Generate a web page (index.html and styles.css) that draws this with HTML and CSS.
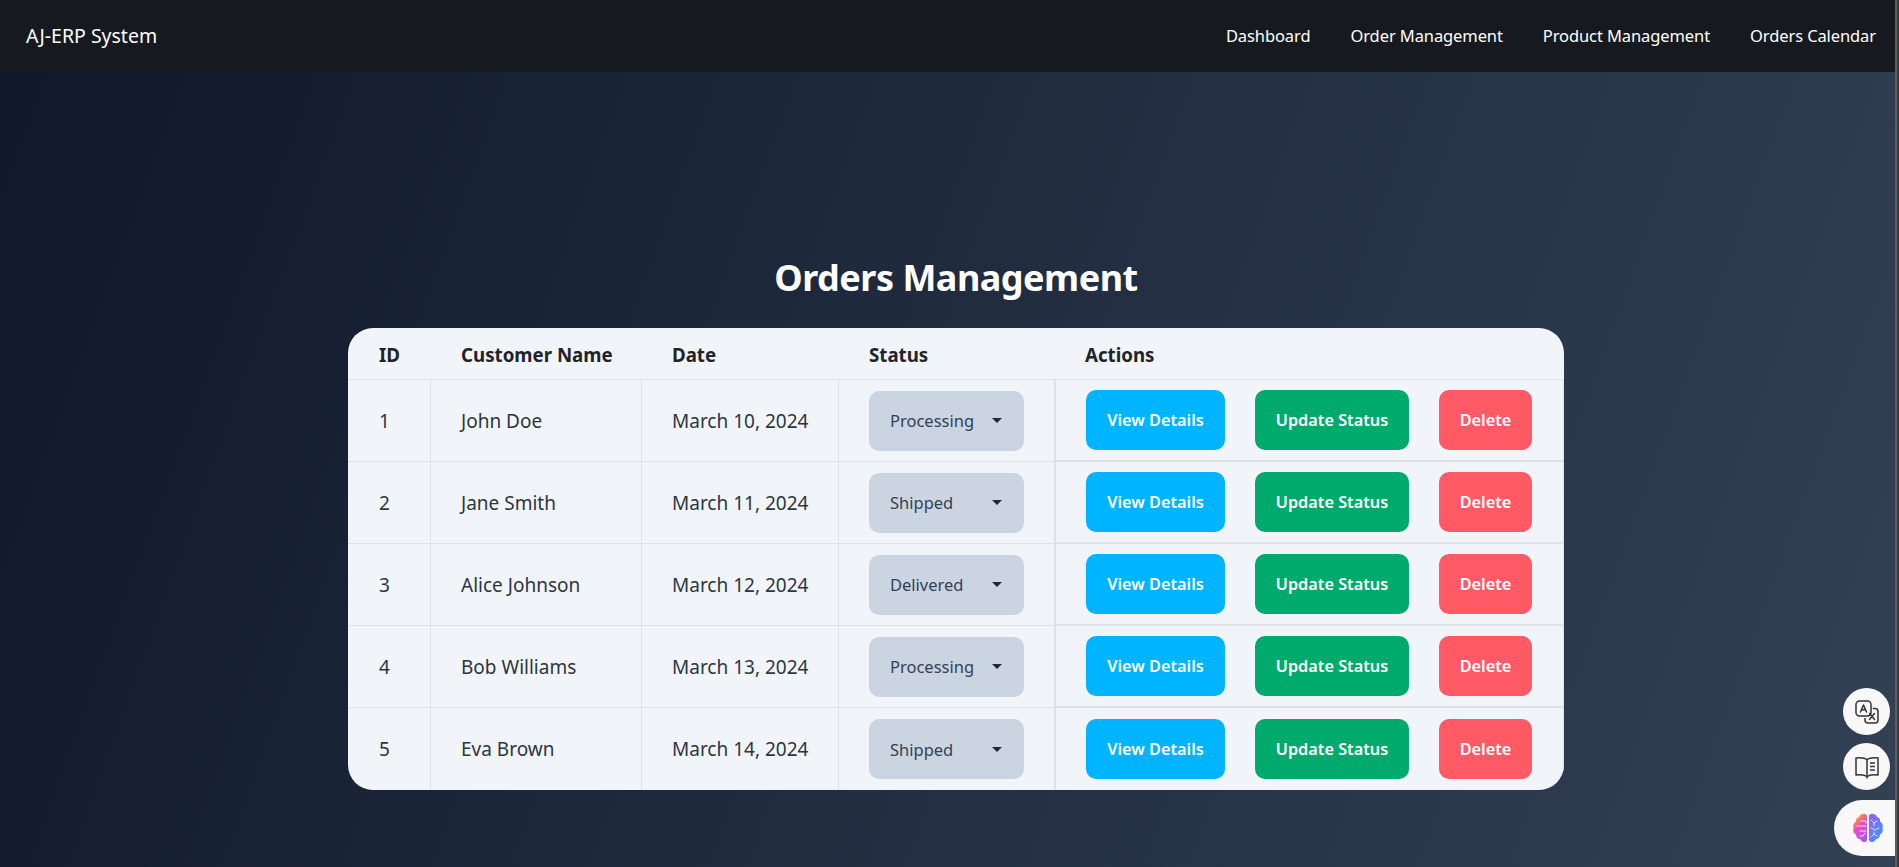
FILE: index.html
```html
<!DOCTYPE html>
<html lang="en">
<head>
<meta charset="utf-8">
<title>AJ-ERP System</title>
<link rel="stylesheet" href="styles.css">
</head>
<body>
<nav class="navbar">
  <a class="brand" href="#">AJ-ERP System</a>
  <div class="nav-links">
    <a href="#">Dashboard</a>
    <a href="#">Order Management</a>
    <a href="#">Product Management</a>
    <a href="#">Orders Calendar</a>
  </div>
</nav>
<main class="content">
  <h1 class="title">Orders Management</h1>
  <div class="table-card">
    <table class="orders">
      <colgroup>
        <col class="c-id"><col class="c-name"><col class="c-date"><col class="c-status"><col class="c-actions">
      </colgroup>
      <thead>
        <tr><th>ID</th><th>Customer Name</th><th>Date</th><th>Status</th><th>Actions</th></tr>
      </thead>
      <tbody>
        <tr>
          <td>1</td><td>John Doe</td><td>March 10, 2024</td>
          <td><div class="select"><span>Processing</span><i class="caret"></i></div></td>
          <td class="actions"><div class="btns"><button class="btn view">View Details</button><button class="btn update">Update Status</button><button class="btn del">Delete</button></div></td>
        </tr>
        <tr>
          <td>2</td><td>Jane Smith</td><td>March 11, 2024</td>
          <td><div class="select"><span>Shipped</span><i class="caret"></i></div></td>
          <td class="actions"><div class="btns"><button class="btn view">View Details</button><button class="btn update">Update Status</button><button class="btn del">Delete</button></div></td>
        </tr>
        <tr>
          <td>3</td><td>Alice Johnson</td><td>March 12, 2024</td>
          <td><div class="select"><span>Delivered</span><i class="caret"></i></div></td>
          <td class="actions"><div class="btns"><button class="btn view">View Details</button><button class="btn update">Update Status</button><button class="btn del">Delete</button></div></td>
        </tr>
        <tr>
          <td>4</td><td>Bob Williams</td><td>March 13, 2024</td>
          <td><div class="select"><span>Processing</span><i class="caret"></i></div></td>
          <td class="actions"><div class="btns"><button class="btn view">View Details</button><button class="btn update">Update Status</button><button class="btn del">Delete</button></div></td>
        </tr>
        <tr>
          <td>5</td><td>Eva Brown</td><td>March 14, 2024</td>
          <td><div class="select"><span>Shipped</span><i class="caret"></i></div></td>
          <td class="actions"><div class="btns"><button class="btn view">View Details</button><button class="btn update">Update Status</button><button class="btn del">Delete</button></div></td>
        </tr>
      </tbody>
    </table>
  </div>
</main>
<div class="scrollbar"></div>
<div class="float-tools">
  <div class="fab">
    <svg width="26" height="26" viewBox="0 0 26 26" fill="none" stroke="#333" stroke-width="1.5" stroke-linejoin="round" stroke-linecap="round">
      <rect x="2" y="2" width="15" height="15" rx="3.5" fill="#f8f8f8"/>
      <path d="M6.5 13 9.5 6 12.5 13M7.6 10.8h3.8"/>
      <path d="M19.5 9.5h1.5a3 3 0 0 1 3 3V21a3 3 0 0 1-3 3h-7a3 3 0 0 1-3-3v-1.5"/>
      <path d="M15.5 14.5l5 6M20.5 14.5l-5 6"/>
    </svg>
  </div>
  <div class="fab">
    <svg width="26" height="26" viewBox="0 0 26 26" fill="none" stroke="#333" stroke-width="1.5" stroke-linejoin="round">
      <path d="M13 5.5C11 4 7 3.5 2 4v17c5-.5 9 0 11 1.5 2-1.5 6-2 11-1.5V4c-5-.5-9 0-11 1.5Z"/>
      <path d="M13 5.5v19M16 9h5M16 12.5h5M16 16h5"/>
    </svg>
  </div>
  <div class="ai-tab">
    <svg width="32" height="30" viewBox="0 0 32 30" fill="none">
      <defs>
        <linearGradient id="brainL" x1="0.3" y1="0" x2="0.8" y2="1">
          <stop offset="0.08" stop-color="#ff9d2e"/><stop offset=".42" stop-color="#e84bc4"/><stop offset="1" stop-color="#a855f7"/>
        </linearGradient>
        <linearGradient id="brainR" x1="0" y1="0" x2="1" y2="1">
          <stop offset="0" stop-color="#9b5cf6"/><stop offset="1" stop-color="#2f9bff"/>
        </linearGradient>
      </defs>
      <path fill="url(#brainL)" d="M15 3.500C15 1.500 13 .5 11 1 9 1 7.500 2 7 4 4.500 4.500 3.500 6.500 4 8.500 1.500 10 .5 12.500 1.500 15 .5 18 2 20.500 4 21.500 4 24 5.500 26 8 26 9 28.500 11.500 29.500 13 29 14.500 28.500 15 27.500 15 26Z"/>
      <path fill="url(#brainR)" d="M17 3.500C17 1.500 19 .5 21 1 23 1 24.500 2 25 4 27.500 4.500 28.500 6.500 28 8.500 30.500 10 31.500 12.500 30.500 15 31.500 18 30 20.500 28 21.500 28 24 26.500 26 24 26 23 28.500 20.500 29.500 19 29 17.500 28.500 17 27.500 17 26Z"/>
      <path stroke="#fff" stroke-opacity=".8" stroke-width="1" stroke-linecap="round" stroke-linejoin="round" d="M5 13h9M8 18h6M9 8h5v2M8 23h3l2-3M19 7l3 3 3-2M22 10v3M19 15l4 2 4-2M19 24l3-3 3 2M22 21v-2"/>
    </svg>
  </div>
</div>
</body>
</html>
```
FILE: styles.css
```css
* { box-sizing: border-box; }

html, body { height: 100%; }

body {
  margin: 0;
  overflow: hidden;
  font-family: "Noto Sans", "Open Sans", sans-serif;
  background: linear-gradient(110deg, #0f172a 0%, #334155 100%);
}

.navbar {
  display: flex;
  align-items: center;
  justify-content: space-between;
  height: 72px;
  padding: 0 23px 1px 26px;
  background: #161a1f;
}

.navbar a {
  color: #fff;
  text-decoration: none;
}

.brand { font-size: 19.500px; }

.nav-links {
  display: flex;
  gap: 40px;
  font-size: 16.500px;
  letter-spacing: -0.1px;
}

.content { padding: 0 0 0 348px; }

.title {
  width: 1216px;
  margin: 181px 0 25px;
  height: 50px;
  line-height: 50px;
  text-align: center;
  color: #fff;
  font-size: 36px;
  font-weight: 700;
  letter-spacing: -0.5px;
}

.table-card {
  width: 1216px;
  height: 462px;
  border-radius: 25px;
  overflow: hidden;
  background: #f1f5f9;
}

.orders {
  width: 100%;
  table-layout: fixed;
  border-collapse: separate;
  border-spacing: 0;
  font-size: 19px;
  color: #2d3540;
}

.c-id { width: 83px; }
.c-name { width: 211px; }
.c-date { width: 197px; }
.c-status { width: 215px; }
.c-actions { width: 510px; }

.orders th {
  height: 52px;
  padding: 1px 0 0 30px;
  text-align: left;
  font-weight: 700;
  font-size: 18.700px;
  white-space: nowrap;
  color: #1f2328;
  border-bottom: 1px solid #dde2e9;
}

.orders th:first-child,
.orders td:first-child { padding-left: 31px; }

.orders th:last-child { padding-left: 31px; }

.orders td {
  height: 82px;
  padding: 10px 0 10px 30px;
  white-space: nowrap;
  border-bottom: 1px solid #dde2e9;
  border-right: 1px solid #dde2e9;
}

.orders td:nth-child(4) { border-right: 0; }

.orders tbody tr:last-child td { border-bottom: 0; }

.orders td.actions {
  border-left: 2px solid #dde2e9;
  border-bottom: 2px solid #dde2e9;
  border-right: 1px solid #dde2e9;
}

.select {
  display: flex;
  align-items: center;
  justify-content: space-between;
  width: 155px;
  height: 60px;
  padding: 0 22px 0 21px;
  border-radius: 10px;
  background: #cbd5e1;
  font-size: 16.500px;
  color: #334155;
}

.caret {
  width: 0;
  height: 0;
  border-left: 5px solid transparent;
  border-right: 5px solid transparent;
  border-top: 5px solid #1f2937;
}

.btns {
  display: flex;
  gap: 30px;
}

.btn {
  height: 60px;
  padding: 0;
  border: 0;
  border-radius: 10px;
  color: #fff;
  font-family: inherit;
  font-size: 16.300px;
  font-weight: 600;
  white-space: nowrap;
}

.view { background: #00b4ff; width: 139px; }
.update { background: #00aa6c; width: 154px; }
.del { background: #ff5a65; width: 93px; }

.scrollbar {
  position: fixed;
  top: 0;
  right: 0;
  bottom: 0;
  width: 4px;
  background: linear-gradient(90deg, #5c5c5c 50%, #3c3c3c 50%);
}

.float-tools {
  position: fixed;
  right: 4px;
  top: 688px;
  display: flex;
  flex-direction: column;
  align-items: flex-end;
}

.fab {
  display: flex;
  align-items: center;
  justify-content: center;
  width: 47px;
  height: 47px;
  margin: 0 5px 8px 0;
  border-radius: 50%;
  background: #f8f8f8;
}

.ai-tab {
  display: flex;
  align-items: center;
  justify-content: flex-start;
  width: 61px;
  height: 56px;
  margin-top: 2px;
  padding-left: 18px;
  border-radius: 28px 0 0 28px;
  background: #f8f8f8;
}
```
